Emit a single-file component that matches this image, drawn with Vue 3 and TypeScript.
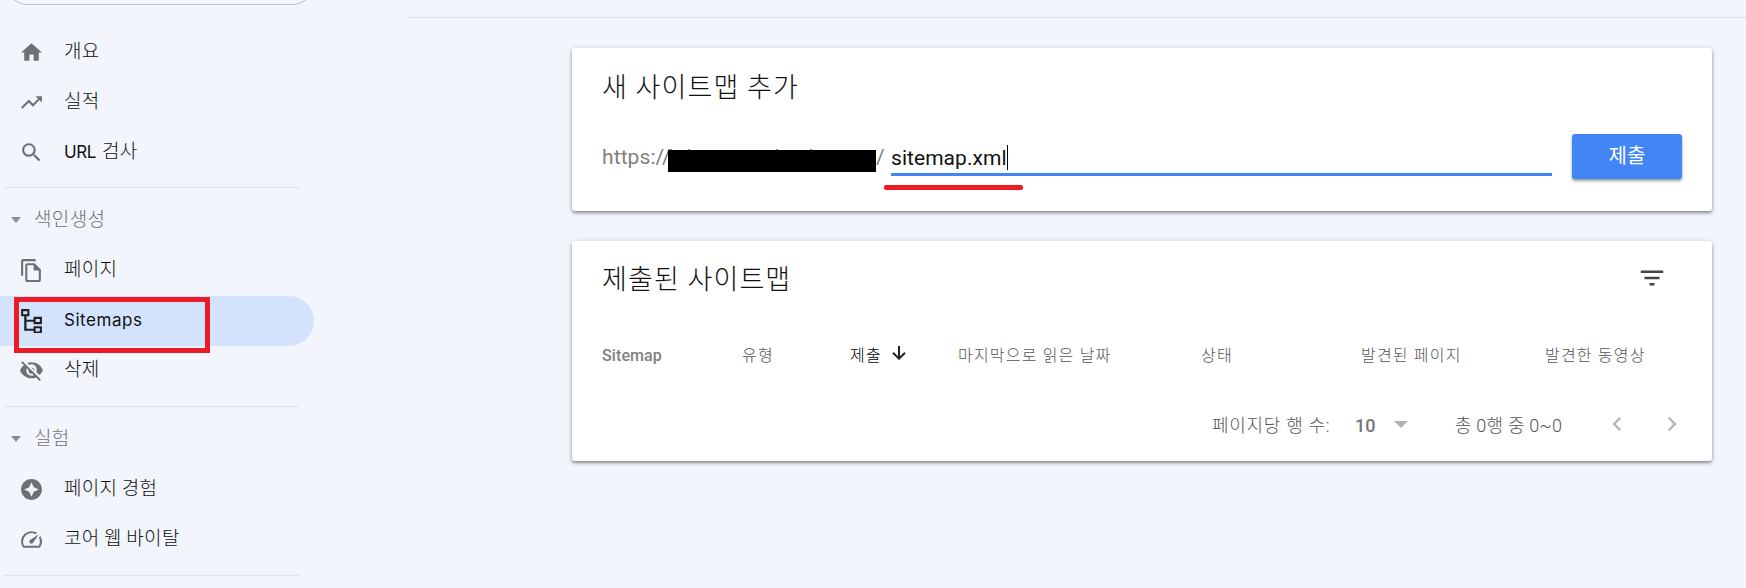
<script setup lang="ts">
interface NavItem { label: string; prefix?: string; icon: string; latin?: boolean; active?: boolean; path: string }
interface NavGroup { title?: string; items: NavItem[] }
interface Column { label: string; cls: string; sorted?: boolean }

const groups: NavGroup[] = [
  {
    items: [
      { label: '개요', icon: 'home', path: 'M10 20v-6h4v6h5v-8h3L12 3 2 12h3v8z' },
      { label: '실적', icon: 'trend', path: 'M16 6l2.29 2.29-4.88 4.88-4-4L2 16.59 3.41 18l6-6 4 4 6.3-6.29L22 12V6z' },
      {
        prefix: 'URL', label: '검사', icon: 'search',
        path: 'M15.5 14h-.79l-.28-.27C15.41 12.59 16 11.11 16 9.5 16 5.91 13.09 3 9.5 3S3 5.91 3 9.5 5.91 16 9.5 16c1.61 0 3.09-.59 4.23-1.57l.27.28v.79l5 4.99L20.49 19l-4.99-5zm-6 0C7.01 14 5 11.99 5 9.5S7.01 5 9.5 5 14 7.01 14 9.5 11.99 14 9.5 14z',
      },
    ],
  },
  {
    title: '색인생성',
    items: [
      {
        label: '페이지', icon: 'pages',
        path: 'M16 1H4c-1.1 0-2 .9-2 2v14h2V3h12V1zm-1 4H8c-1.1 0-1.99.9-1.99 2L6 21c0 1.1.89 2 1.99 2H19c1.1 0 2-.9 2-2V11l-6-6zM8 21V7h6v5h5v9H8z',
      },
      {
        label: 'Sitemaps', icon: 'tree', latin: true, active: true,
        path: 'M2 1h8v7H7.200v3.200H14V8.500h8v7h-8v-2.300H7.200v6.600H14v-2.300h8v7h-8v-2.700H5V8H2zM4 3v3h4V3zM16 10.500v3h4v-3zM16 19.500v3h4v-3z',
      },
      {
        label: '삭제', icon: 'hidden',
        path: 'M12 6c2.760 0 5 2.240 5 5.500 0 .65-.13 1.260-.36 1.830l2.920 2.920c1.510-1.260 2.700-2.890 3.430-4.750-1.730-4.390-6-7.500-11-7.500-1.400 0-2.740.25-3.980.7l2.160 2.160C10.740 6.130 11.350 6 12 6zM2 4.270l2.280 2.280.46.46C3.080 8.300 1.780 10.020 1 12c1.730 4.390 6 7.500 11 7.500 1.550 0 3.030-.3 4.380-.84l.42.42L19.730 22 21 20.730 3.270 3 2 4.270zM7.530 9.800l1.550 1.550c-.05.21-.08.43-.08.65 0 1.660 1.340 3 3 3 .22 0 .44-.03.65-.08l1.550 1.550c-.67.33-1.410.53-2.200.53-2.760 0-5-2.240-5-5 0-.79.2-1.530.53-2.200zm4.310-.78l3.150 3.150.02-.16c0-1.660-1.340-3-3-3l-.17.01z',
      },
    ],
  },
  {
    title: '실험',
    items: [
      {
        label: '페이지 경험', icon: 'experience',
        path: 'M12 2C6.480 2 2 6.480 2 12s4.480 10 10 10 10-4.480 10-10S17.520 2 12 2zm0 17l-2.200-4.800L5 12l4.800-2.200L12 5l2.200 4.800L19 12l-4.800 2.200z',
      },
      {
        label: '코어 웹 바이탈', icon: 'speed',
        path: 'M20.380 8.570l-1.230 1.850a8 8 0 0 1-.22 7.580H5.070A8 8 0 0 1 15.580 6.850l1.850-1.230A10 10 0 0 0 3.350 19a2 2 0 0 0 1.720 1h13.850a2 2 0 0 0 1.740-1 10 10 0 0 0-.27-10.440zm-9.790 6.840a2 2 0 0 0 2.830 0l5.660-8.490-8.490 5.660a2 2 0 0 0 0 2.830z',
      },
    ],
  },
]

const columns: Column[] = [
  { label: 'Sitemap', cls: 'latin' },
  { label: '유형', cls: '' },
  { label: '제출', cls: '', sorted: true },
  { label: '마지막으로 읽은 날짜', cls: '' },
  { label: '상태', cls: '' },
  { label: '발견된 페이지', cls: '' },
  { label: '발견한 동영상', cls: '' },
]
</script>

<template>
  <div class="page">
    <aside class="sidebar">
      <div class="search-pill"></div>
      <nav v-for="(group, gi) in groups" :key="gi" class="group">
        <div v-if="group.title" class="group-title">
          <span class="caret-down"></span><span class="group-label">{{ group.title }}</span>
        </div>
        <div v-for="item in group.items" :key="item.label" class="item" :class="{ active: item.active }">
          <svg class="icon" :class="item.icon" viewBox="0 0 24 24"><path fill-rule="evenodd" :d="item.path" /></svg>
          <span class="label" :class="{ latin: item.latin }"><span v-if="item.prefix" class="prefix">{{ item.prefix }}</span>{{ item.label }}</span>
          <span v-if="item.active" class="mark-box"></span>
        </div>
      </nav>
      <div class="end-line"></div>
    </aside>

    <main class="main">
      <div class="top-line"></div>
      <section class="card add-card">
        <h2 class="title">새 사이트맵 추가</h2>
        <div class="form">
          <span class="scheme">https://</span>
          <span class="redacted"><i class="tick t1"></i><i class="tick t2"></i><i class="tick t3"></i><i class="tick t4"></i></span>
          <span class="slash">/</span>
          <div class="field"><span class="value">sitemap.xml</span><span class="cursor"></span><span class="mark-line"></span></div>
          <button class="submit">제출</button>
        </div>
      </section>

      <section class="card list-card">
        <div class="list-head">
          <h2 class="title">제출된 사이트맵</h2>
          <svg class="filter" viewBox="0 0 24 24"><path d="M10 18h4v-2h-4v2zM3 6v2h18V6H3zm3 7h12v-2H6v2z" /></svg>
        </div>
        <div class="columns">
          <div v-for="col in columns" :key="col.label" class="col" :class="[col.cls, { sorted: col.sorted }]">
            <span>{{ col.label }}</span>
            <svg v-if="col.sorted" class="arrow" viewBox="0 0 14 14"><path d="M7 0v12.500M1 6.700l6 6 6-6" /></svg>
          </div>
        </div>
        <div class="pager">
          <span class="per-page">페이지당 행 수:</span>
          <span class="count">10</span>
          <span class="drop"></span>
          <span class="range">총 0행 중 0~0</span>
          <svg class="chev prev" viewBox="0 0 10 14"><path d="M8.300 .8L2 7l6.300 6.200" /></svg>
          <svg class="chev next" viewBox="0 0 10 14"><path d="M1.700 .8L8 7l-6.300 6.200" /></svg>
        </div>
      </section>
    </main>
  </div>
</template>

<style>
html, body { background: #f1f5fd; overflow: hidden; }
</style>

<style scoped>
.page {
  display: flex;
  width: 1746px;
  height: 588px;
  overflow: hidden;
  background: #f2f5fc;
  font-family: Roboto, "Noto Sans CJK KR", sans-serif;
  font-weight: 300;
  color: #111;
}
.page * { box-sizing: border-box; }
.sidebar { width: 409px; flex: none; }
.search-pill {
  width: 312px;
  height: 48px;
  margin: -43px 0 0 4px;
  border: 1px solid #c0c1c4;
  border-radius: 24px;
}
.group:first-of-type { padding-top: 22px; }
.group + .group::before, .end-line {
  content: "";
  display: block;
  width: 295px;
  height: 1px;
  margin: 10px 0 0 4px;
  background: #dfe1e3;
}
.group-title { display: flex; align-items: center; height: 58px; padding-left: 11px; }
.caret-down {
  width: 0;
  margin-top: 6px;
  border: 5.500px solid transparent;
  border-top: 6px solid #8b8d90;
  border-bottom: 0;
}
.group-label {
  margin: 1px 0 0 13px;
  font-family: "Noto Sans CJK KR", sans-serif;
  font-size: 19px;
  line-height: 28px;
  letter-spacing: 0.350px;
  color: #6f7377;
}
.item { position: relative; display: flex; align-items: center; width: 314px; height: 50px; padding-left: 19px; }
.item.active { background: #d3e3fd; border-radius: 0 25px 25px 0; }
.icon { width: 25px; height: 25px; flex: none; fill: #6e7073; }
.group + .group .icon { margin-bottom: 2px; }
.active .icon { fill: #202124; }
.label {
  margin: 0 0 4px 20px;
  font-family: "Noto Sans CJK KR", sans-serif;
  font-size: 19px;
  line-height: 28px;
  letter-spacing: 0.300px;
}
.group + .group .label { margin-bottom: 6px; }
.prefix { margin-right: 6px; font: 400 17px/20px Inter, sans-serif; letter-spacing: -0.400px; }
.group + .group .label.latin { font-family: Inter, sans-serif; font-size: 17px; font-weight: 400; letter-spacing: 0.550px; margin-bottom: 2px; }
.mark-box { position: absolute; left: 14px; top: 1px; width: 196px; height: 56px; border: 5px solid #ed1c24; z-index: 2; }

.main { flex: 1; }
.top-line { height: 18px; border-bottom: 1px solid #dcdee3; }
.card {
  width: 1140px;
  margin-left: 163px;
  padding: 0 30px;
  background: #fff;
  border-radius: 3px;
  box-shadow: 0 2px 3px rgba(0, 0, 0, 0.34), 0 1px 6px rgba(0, 0, 0, 0.16);
}
.add-card { height: 163px; margin-top: 30px; padding-top: 20px; }
.title {
  margin: 0;
  font-size: 27px;
  line-height: 40px;
  font-weight: 300;
  letter-spacing: 1.100px;
}
.form { display: flex; height: 45px; margin-top: 26px; }
.scheme, .slash { width: 66px; font-size: 21px; line-height: 46px; color: #808080; font-weight: 400; letter-spacing: 0.100px; }
.slash { width: 15px; }
.redacted { position: relative; width: 208px; height: 22px; margin-top: 16px; background: #000; }
.tick { position: absolute; top: -1px; width: 2px; height: 1px; background: #888; }
.t1 { left: 2px; }
.t2 { left: 20px; }
.t3 { left: 108px; }
.t4 { left: 142px; }
.field { position: relative; display: flex; width: 661px; height: 42px; border-bottom: 3px solid #4285f4; }
.value { font-size: 21px; line-height: 48px; font-weight: 400; letter-spacing: 0.050px; color: #111; white-space: nowrap; }
.cursor { width: 1px; height: 25px; margin-top: 11px; background: #000; }
.mark-line { position: absolute; left: -7px; top: 51px; width: 139px; height: 5px; border-radius: 2px; background: #ed1c24; }
.submit {
  width: 110px;
  height: 45px;
  margin-left: 20px;
  padding: 0 0 3px;
  border: 0;
  border-radius: 3px;
  background: #4285f4;
  box-shadow: 0 2px 3px rgba(0, 0, 0, 0.4);
  color: #fff;
  font: 400 20px/40px "Noto Sans CJK KR", sans-serif;
}
.list-card { height: 220px; margin-top: 30px; padding-top: 19px; }
.list-head { display: flex; justify-content: space-between; }
.filter { width: 30px; height: 30px; margin: 3px 15px 0 0; fill: #444; }
.columns {
  display: grid;
  grid-template-columns: 140px 108px 108px 243px 160px 184px 1fr;
  height: 30px;
  margin-top: 41px;
}
.col { display: flex; font-size: 16px; line-height: 30px; letter-spacing: 1.200px; color: #555; white-space: nowrap; }
.col.latin { font-weight: 500; letter-spacing: 0.100px; color: #808080; }
.col.sorted { color: #000; }
.arrow { width: 14px; height: 14px; margin: 5px 0 0 10px; fill: none; stroke: #222; stroke-width: 2; }
.pager { display: flex; height: 30px; margin: 40px 0 0 610px; font-size: 18px; line-height: 30px; color: #555; white-space: nowrap; }
.per-page { width: 143px; letter-spacing: 0.700px; }
.count { width: 39px; font-weight: 500; letter-spacing: 0; color: #757575; }
.drop { width: 14px; height: 7px; margin-top: 10px; border: 7px solid transparent; border-top-color: #b3b3b3; border-bottom: 0; }
.range { width: 157px; margin-left: 47px; letter-spacing: 0.200px; }
.chev { width: 10px; height: 14px; margin-top: 6px; fill: none; stroke: #b3b3b3; stroke-width: 2.300; }
.next { margin-left: 45px; }
</style>
